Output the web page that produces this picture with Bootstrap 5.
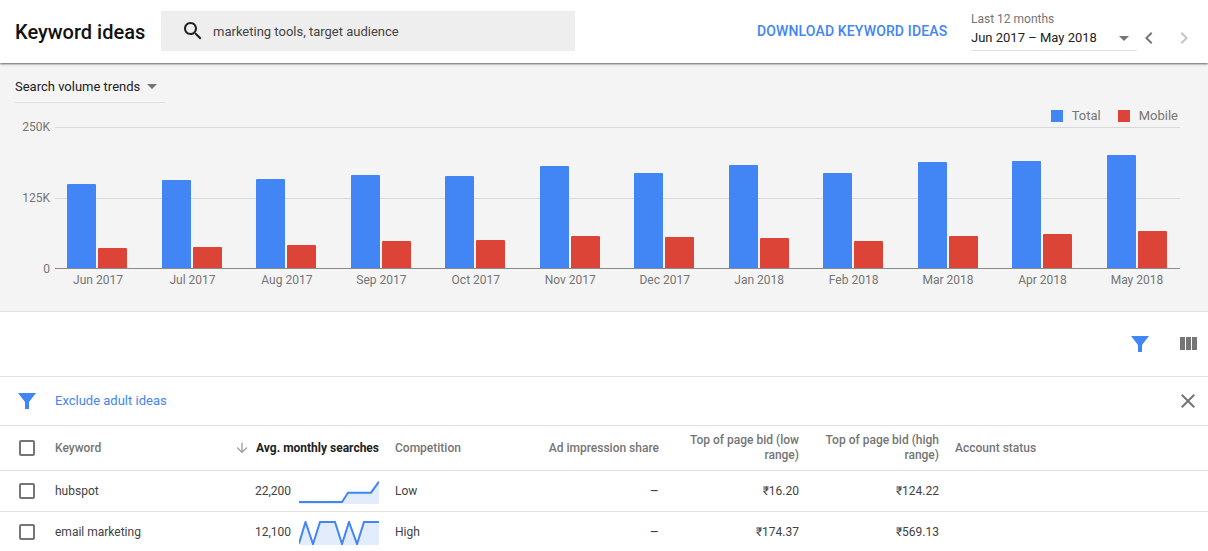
<!DOCTYPE html>
<html lang="en">
<head>
<meta charset="utf-8">
<title>Keyword ideas</title>
<link href="https://cdn.jsdelivr.net/npm/bootstrap@5.3.0/dist/css/bootstrap.min.css" rel="stylesheet">
<style>
html,body{height:551px;overflow:hidden}
body{font-family:Roboto,"Liberation Sans",sans-serif;font-size:13px;color:#212121;background:#fff}
.kw-head{height:63px;padding-left:15px;background:#fff;position:relative;z-index:2;box-shadow:0 1px 2px rgba(0,0,0,.6)}
.kw-title{font-size:20px;font-weight:500;color:#111;width:146px;line-height:1}
.kw-search{width:414px;height:40px;margin-bottom:1px;background:#eee;padding-left:20px;color:#444;font-size:13px;gap:8px}
.kw-search span{padding-top:1px}
.kw-download{color:#4285f4;font-size:14px;font-weight:500;letter-spacing:.14px;text-transform:uppercase;text-decoration:none;margin-left:182px;width:214px;white-space:nowrap}
.kw-range{width:166px;height:51px;border-bottom:1px solid #e0e0e0;align-self:flex-start;padding-top:12px}
.kw-range-label{font-size:12px;color:#757575;line-height:14px}
.kw-range-value{font-size:13px;color:#212121;line-height:24px;height:24px}
.kw-caret{width:0;height:0;border-left:5px solid transparent;border-right:5px solid transparent;border-top:5px solid #757575;display:block}
.kw-nav{width:24px;height:24px;display:block}
.kw-navs{gap:11px;margin-top:12px}
.kw-chart{height:249px;background:#f4f4f4;border-bottom:1px solid #e0e0e0;padding-top:14px}
.kw-select{width:150px;height:26px;margin-left:15px;border-bottom:1px solid #e0e0e0;padding-bottom:6px;color:#212121;gap:7px}
.kw-legend{height:16px;margin:5px 30px 3px 0;color:#757575;gap:17px;line-height:16px}
.kw-swatch{width:12px;height:12px;display:block;margin-right:9px}
.kw-blue{background:#4285f4}.kw-red{background:#db4437}
.kw-axis{width:50px;height:158px;margin:-8px 5px -8px 0;color:#757575;font-size:12px;line-height:16px;text-align:right}
.kw-plot{width:1125px;height:142px;padding:0 13px 0 12px;border-top:1px solid #d9d9d9;border-bottom:1px solid #8a8a8a;background:linear-gradient(#d9d9d9,#d9d9d9) 0 70px/100% 1px no-repeat}
.kw-group{width:60px;gap:2px}
.kw-bar{width:29px;display:block;border-radius:1px 1px 0 0}
.kw-xaxis{width:1125px;margin-left:55px;padding:3px 13px 0 13px;color:#757575;font-size:12px;line-height:16px}
.kw-xlabel{width:60px;text-align:center;white-space:nowrap}
.kw-tools{height:65px;border-bottom:1px solid #e0e0e0;padding-right:8px;gap:24px}
.kw-filter{height:49px;border-bottom:1px solid #e0e0e0;padding:0 8px 0 15px}
.kw-filter a{color:#4285f4;text-decoration:none;margin-left:16px;margin-top:-1px}
.kw-table{table-layout:fixed;width:1208px;margin:0;font-size:12px;color:#424242}
.kw-table>:not(caption)>*>*{padding:0 8px;vertical-align:middle;border-bottom:1px solid #e0e0e0;color:inherit;background:transparent;box-shadow:none}
.kw-table thead th{height:44px;color:#757575;font-weight:500;line-height:15px;padding-top:1px}
.kw-table tbody td{height:41px}
.kw-table thead th.kw-sorted{color:#212121;font-weight:700;white-space:nowrap}
.kw-sortrow{gap:6px}
.kw-table .form-check-input{width:16px;height:16px;margin:0 0 0 11px;border:2px solid #757575;border-radius:2px;background-color:#fff;display:block;float:none}
.kw-num{width:56px;text-align:right;margin-right:8px;flex:none}
.kw-spark{display:block;flex:none;margin-top:2px}
.kw-dash{font-size:14px;line-height:1;vertical-align:-1px}
.kw-c1{width:47px}.kw-c2{width:180px}.kw-c3{width:160px}.kw-c4{width:133px}.kw-c5{width:147px}.kw-c6{width:140px}
svg{display:block;flex:none}
</style>
</head>
<body>
<header class="kw-head d-flex align-items-center">
  <div class="kw-title">Keyword ideas</div>
  <div class="kw-search d-flex align-items-center">
    <svg width="24" height="24" viewBox="0 0 24 24" fill="#212121"><path d="M15.5 14h-.79l-.28-.27C15.41 12.59 16 11.11 16 9.5 16 5.91 13.09 3 9.5 3S3 5.91 3 9.5 5.91 16 9.5 16c1.61 0 3.09-.59 4.23-1.57l.27.28v.79l5 4.99L20.49 19l-4.99-5zm-6 0C7.01 14 5 11.99 5 9.5S7.01 5 9.5 5 14 7.01 14 9.5 11.99 14 9.5 14z"/></svg>
    <span>marketing tools, target audience</span>
  </div>
  <a class="kw-download" href="#">Download keyword ideas</a>
  <div class="kw-range">
    <div class="kw-range-label">Last 12 months</div>
    <div class="kw-range-value d-flex align-items-center justify-content-between pe-2"><span>Jun 2017 – May 2018</span><span class="kw-caret"></span></div>
  </div>
  <div class="kw-navs d-flex">
    <svg class="kw-nav" viewBox="0 0 24 24" fill="#757575"><path d="M15.41 7.41L14 6l-6 6 6 6 1.41-1.41L10.83 12z"/></svg>
    <svg class="kw-nav" viewBox="0 0 24 24" fill="#c4c4c4"><path d="M10 6L8.59 7.41 13.17 12l-4.58 4.59L10 18l6-6z"/></svg>
  </div>
</header>

<section class="kw-chart">
  <div class="kw-select d-flex align-items-center"><span>Search volume trends</span><span class="kw-caret"></span></div>
  <div class="kw-legend d-flex justify-content-end">
    <div class="d-flex align-items-center"><span class="kw-swatch kw-blue"></span>Total</div>
    <div class="d-flex align-items-center"><span class="kw-swatch kw-red"></span>Mobile</div>
  </div>
  <div class="d-flex">
    <div class="kw-axis d-flex flex-column justify-content-between"><span>250K</span><span>125K</span><span>0</span></div>
    <div class="kw-plot d-flex justify-content-between align-items-end">
      <div class="kw-group d-flex align-items-end"><span class="kw-bar kw-blue" style="height:84px"></span><span class="kw-bar kw-red" style="height:20px"></span></div>
      <div class="kw-group d-flex align-items-end"><span class="kw-bar kw-blue" style="height:88px"></span><span class="kw-bar kw-red" style="height:21px"></span></div>
      <div class="kw-group d-flex align-items-end"><span class="kw-bar kw-blue" style="height:89px"></span><span class="kw-bar kw-red" style="height:23px"></span></div>
      <div class="kw-group d-flex align-items-end"><span class="kw-bar kw-blue" style="height:93px"></span><span class="kw-bar kw-red" style="height:27px"></span></div>
      <div class="kw-group d-flex align-items-end"><span class="kw-bar kw-blue" style="height:92px"></span><span class="kw-bar kw-red" style="height:28px"></span></div>
      <div class="kw-group d-flex align-items-end"><span class="kw-bar kw-blue" style="height:102px"></span><span class="kw-bar kw-red" style="height:32px"></span></div>
      <div class="kw-group d-flex align-items-end"><span class="kw-bar kw-blue" style="height:95px"></span><span class="kw-bar kw-red" style="height:31px"></span></div>
      <div class="kw-group d-flex align-items-end"><span class="kw-bar kw-blue" style="height:103px"></span><span class="kw-bar kw-red" style="height:30px"></span></div>
      <div class="kw-group d-flex align-items-end"><span class="kw-bar kw-blue" style="height:95px"></span><span class="kw-bar kw-red" style="height:27px"></span></div>
      <div class="kw-group d-flex align-items-end"><span class="kw-bar kw-blue" style="height:106px"></span><span class="kw-bar kw-red" style="height:32px"></span></div>
      <div class="kw-group d-flex align-items-end"><span class="kw-bar kw-blue" style="height:107px"></span><span class="kw-bar kw-red" style="height:34px"></span></div>
      <div class="kw-group d-flex align-items-end"><span class="kw-bar kw-blue" style="height:113px"></span><span class="kw-bar kw-red" style="height:37px"></span></div>
    </div>
  </div>
  <div class="kw-xaxis d-flex justify-content-between">
    <span class="kw-xlabel">Jun 2017</span><span class="kw-xlabel">Jul 2017</span><span class="kw-xlabel">Aug 2017</span><span class="kw-xlabel">Sep 2017</span><span class="kw-xlabel">Oct 2017</span><span class="kw-xlabel">Nov 2017</span><span class="kw-xlabel">Dec 2017</span><span class="kw-xlabel">Jan 2018</span><span class="kw-xlabel">Feb 2018</span><span class="kw-xlabel">Mar 2018</span><span class="kw-xlabel">Apr 2018</span><span class="kw-xlabel">May 2018</span>
  </div>
</section>

<div class="kw-tools d-flex align-items-center justify-content-end">
  <svg width="24" height="24" viewBox="0 0 24 24" fill="#4285f4"><path d="M3 4h18l-7 9v7h-4v-7z"/></svg>
  <svg width="24" height="24" viewBox="0 0 24 24" fill="#757575"><path d="M10 18h5V5h-5v13zm-6 0h5V5H4v13zM16 5v13h5V5h-5z"/></svg>
</div>

<div class="kw-filter d-flex align-items-center">
  <svg width="24" height="24" viewBox="0 0 24 24" fill="#4285f4"><path d="M3 4h18l-7 9v7h-4v-7z"/></svg>
  <a href="#">Exclude adult ideas</a>
  <svg class="ms-auto" width="24" height="24" viewBox="0 0 24 24" fill="#757575"><path d="M19 6.41L17.59 5 12 10.59 6.41 5 5 6.41 10.59 12 5 17.59 6.41 19 12 13.41 17.59 19 19 17.59 13.41 12z"/></svg>
</div>

<table class="table kw-table">
  <colgroup><col class="kw-c1"><col class="kw-c2"><col class="kw-c3"><col class="kw-c4"><col class="kw-c5"><col class="kw-c6"><col class="kw-c6"><col></colgroup>
  <thead>
    <tr>
      <th><input class="form-check-input" type="checkbox" aria-label="Select all"></th>
      <th>Keyword</th>
      <th class="kw-sorted"><div class="kw-sortrow d-flex align-items-center justify-content-end">
        <svg width="16" height="16" viewBox="0 0 24 24" fill="#9e9e9e"><path d="M20 12l-1.41-1.41L13 16.17V4h-2v12.17l-5.58-5.59L4 12l8 8 8-8z"/></svg><span>Avg. monthly searches</span></div></th>
      <th>Competition</th>
      <th class="text-end">Ad impression share</th>
      <th class="text-end">Top of page bid (low range)</th>
      <th class="text-end">Top of page bid (high range)</th>
      <th>Account status</th>
    </tr>
  </thead>
  <tbody>
    <tr>
      <td><input class="form-check-input" type="checkbox" aria-label="Select hubspot"></td>
      <td>hubspot</td>
      <td><div class="d-flex align-items-center justify-content-end"><span class="kw-num">22,200</span>
        <svg class="kw-spark" width="80" height="24" viewBox="0 0 80 24"><path d="M0 22H43L49 12.7H72L80 1.7V24H0z" fill="#e3ecfb"/><path d="M0 22H43L49 12.7H72L80 1.7" fill="none" stroke="#4285f4" stroke-width="2"/></svg></div></td>
      <td>Low</td>
      <td class="text-end"><span class="kw-dash">–</span></td>
      <td class="text-end">₹16.20</td>
      <td class="text-end">₹124.22</td>
      <td></td>
    </tr>
    <tr>
      <td><input class="form-check-input" type="checkbox" aria-label="Select email marketing"></td>
      <td>email marketing</td>
      <td><div class="d-flex align-items-center justify-content-end"><span class="kw-num">12,100</span>
        <svg class="kw-spark" width="80" height="24" viewBox="0 0 80 24"><path d="M0 22.5L6.5 1 14 23 21 1H36L43 23 50 1 58 23 65 1H80V24H0z" fill="#e3ecfb"/><path d="M0 22.5L6.5 1 14 23 21 1H36L43 23 50 1 58 23 65 1H80" fill="none" stroke="#4285f4" stroke-width="2"/></svg></div></td>
      <td>High</td>
      <td class="text-end"><span class="kw-dash">–</span></td>
      <td class="text-end">₹174.37</td>
      <td class="text-end">₹569.13</td>
      <td></td>
    </tr>
  </tbody>
</table>
<script src="https://cdn.jsdelivr.net/npm/bootstrap@5.3.0/dist/js/bootstrap.bundle.min.js"></script>
</body>
</html>
